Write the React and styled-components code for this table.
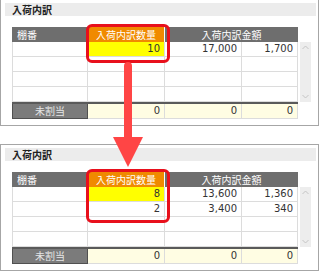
import React from "react";
import styled, { createGlobalStyle } from "styled-components";

const GlobalStyle = createGlobalStyle`
    html, body {
        margin: 0;
        padding: 0;
        background: #ffffff;
    }
    body {
        font-family: "Noto Sans CJK JP", "DejaVu Sans", sans-serif;
        color: #333333;
    }
`;

const Page = styled.div`
    position: relative;
    width: 320px;
    height: 273px;
    overflow: hidden;
    display: flex;
    flex-direction: column;
    gap: 18px;
    padding-top: 0;
    margin-top: -1px;
`;

const Panel = styled.div`
    position: relative;
    width: 319px;
    height: 127px;
    box-sizing: border-box;
    border: 1px solid #a6a6a6;
    padding: 3px 2px 0 4px;
`;

const TitleBar = styled.div`
    height: 13px;
    background: #ececec;
    font-size: 10px;
    font-weight: bold;
    line-height: 13px;
    padding-left: 7px;
    color: #222222;
`;

const TableArea = styled.div`
    margin: 11px 0 0 7px;
    width: 300px;
`;

const Cols = styled.div`
    display: grid;
    grid-template-columns: 76px 77px 77px 56px;
    width: 286px;
`;

const HeadCell = styled.div`
    grid-column: ${(p) => p.span || "auto"};
    height: 15px;
    box-sizing: border-box;
    background: ${(p) => (p.accent ? "#f08a00" : "#6e6e6e")};
    border-right: 1px solid #ffffff;
    color: #ffffff;
    font-size: 10px;
    line-height: 15px;
    text-align: ${(p) => (p.left ? "left" : "center")};
    padding-left: ${(p) => (p.left ? "5px" : "0")};
    &:last-child {
        border-right: none;
    }
`;

const BodyWrap = styled.div`
    display: flex;
    align-items: stretch;
`;

const Cell = styled.div`
    height: 15px;
    box-sizing: border-box;
    border-right: 1px solid #dcdcdc;
    border-bottom: 1px solid #dcdcdc;
    border-left: ${(p) => (p.first ? "1px solid #dcdcdc" : "none")};
    background: ${(p) => (p.hl ? "#ffff00" : "#ffffff")};
    font-family: "DejaVu Sans", sans-serif;
    font-size: 10px;
    line-height: 14px;
    text-align: right;
    padding-right: 4px;
    color: #333333;
`;

const ScrollBar = styled.div`
    width: 11px;
    margin-left: 2px;
    background: #ededed;
    display: flex;
    flex-direction: column;
    justify-content: space-between;
    align-items: center;
    padding: 3px 0;
    box-sizing: border-box;
`;

const Footer = styled(Cols)`
    border-top: 2px solid #5a5a5a;
`;

const FootLabel = styled.div`
    height: 15px;
    box-sizing: border-box;
    background: #7b7b7b;
    border: 1px solid #505050;
    border-top: none;
    color: #e6e6e6;
    font-size: 10px;
    line-height: 14px;
    text-align: center;
`;

const FootCell = styled(Cell)`
    background: #fffde3;
`;

const RedBox = styled.div`
    position: absolute;
    left: 85px;
    top: 24px;
    width: 84px;
    height: ${(p) => p.h}px;
    box-sizing: border-box;
    border: 3px solid #e8101c;
    border-radius: 6px;
    pointer-events: none;
`;

const Arrow = styled.svg`
    position: absolute;
    left: 0;
    top: 1px;
    pointer-events: none;
`;

const Chevron = ({ up }) => (
    <svg width="7" height="5" viewBox="0 0 7 5">
        <path
            d={up ? "M0.5 4 L3.5 1 L6.5 4" : "M0.5 1 L3.5 4 L6.5 1"}
            fill="none"
            stroke="#c4c4c4"
            strokeWidth="1"
        />
    </svg>
);

const fmt = (n) => (n === "" ? "" : n.toLocaleString("en-US"));

const Breakdown = ({ rows, boxHeight }) => {
    const filled = [...rows];
    while (filled.length < 4) filled.push(["", "", ""]);
    return (
        <Panel>
            <TitleBar>入荷内訳</TitleBar>
            <TableArea>
                <Cols>
                    <HeadCell left>棚番</HeadCell>
                    <HeadCell accent>入荷内訳数量</HeadCell>
                    <HeadCell span="span 2">入荷内訳金額</HeadCell>
                </Cols>
                <BodyWrap>
                    <Cols>
                        {filled.map((r, i) => (
                            <React.Fragment key={i}>
                                <Cell first />
                                <Cell hl={i === 0}>{fmt(r[0])}</Cell>
                                <Cell>{fmt(r[1])}</Cell>
                                <Cell>{fmt(r[2])}</Cell>
                            </React.Fragment>
                        ))}
                    </Cols>
                    <ScrollBar>
                        <Chevron up />
                        <Chevron />
                    </ScrollBar>
                </BodyWrap>
                <Footer>
                    <FootLabel>未割当</FootLabel>
                    <FootCell>0</FootCell>
                    <FootCell>0</FootCell>
                    <FootCell>0</FootCell>
                </Footer>
            </TableArea>
            <RedBox h={boxHeight} />
        </Panel>
    );
};

const App = () => {
    return (
        <>
            <GlobalStyle />
            <Page>
                <Breakdown rows={[[10, 17000, 1700]]} boxHeight={39} />
                <Breakdown
                    rows={[
                        [8, 13600, 1360],
                        [2, 3400, 340],
                    ]}
                    boxHeight={54}
                />
                <Arrow width="320" height="273" viewBox="0 0 320 273">
                    <rect x="124" y="62" width="8" height="80" rx="4" fill="#ff4545" />
                    <polygon points="113,137 143,137 128,167" fill="#ff4545" />
                </Arrow>
            </Page>
        </>
    );
};

export default App;
